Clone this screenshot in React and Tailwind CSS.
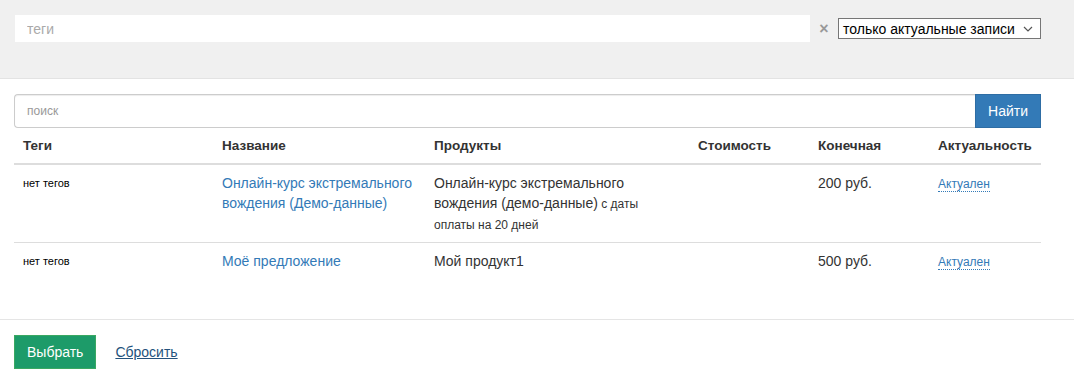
import React from 'react';

const rows = [
    {
        tags: 'нет тегов',
        name: 'Онлайн-курс экстремального вождения (Демо-данные)',
        product: 'Онлайн-курс экстремального вождения (демо-данные)',
        note: 'с даты оплаты на 20 дней',
        price: '200 руб.',
    },
    {
        tags: 'нет тегов',
        name: 'Моё предложение',
        product: 'Мой продукт1',
        note: null,
        price: '500 руб.',
    },
];

export default function App() {
    return (
        <div className="w-[1074px] h-[383px] bg-white text-[#333] text-[14px] leading-5 font-['Liberation_Sans',Arial,sans-serif] overflow-hidden">
            {/* Filter bar */}
            <div className="h-[79px] bg-[#f0f0f0] border-b border-[#e3e3e3] pl-[15px] pr-[33px] pt-[15px]">
                <div className="flex items-center">
                    <input
                        className="w-[795px] h-[27px] bg-white px-3 outline-none placeholder:text-[#aaa] text-[14px]"
                        placeholder="теги"
                    />
                    <span className="w-[28px] text-center text-[#999] text-[16px] font-bold leading-none">×</span>
                    <div className="flex-1 h-[21px] border border-[#767676] bg-white flex items-center justify-between pl-[4px] pr-[7px] text-[14px] text-black whitespace-nowrap">
                        <span>только актуальные записи</span>
                        <svg width="10" height="6" viewBox="0 0 10 6" fill="none" stroke="#555" strokeWidth="1.2">
                            <path d="M1 1l4 4 4-4" />
                        </svg>
                    </div>
                </div>
            </div>

            {/* Search + table */}
            <div className="pl-[14px] pr-[33px] pt-[15px]">
                <div className="flex h-[34px]">
                    <input
                        className="flex-1 border border-[#ccc] border-r-0 rounded-l-[4px] px-3 text-[12px] outline-none placeholder:text-[#999] shadow-[inset_0_1px_1px_rgba(0,0,0,0.075)]"
                        placeholder="поиск"
                    />
                    <button className="w-[66px] bg-[#337ab7] border border-[#2e6da4] text-white text-[14px]">Найти</button>
                </div>

                <table className="w-full border-collapse">
                    <thead>
                        <tr className="border-b-2 border-[#ddd] text-[13.5px] font-bold text-left">
                            <th className="w-[200px] px-[9px] pt-[8px] pb-[7px]">Теги</th>
                            <th className="w-[212px] px-[8px] pt-[8px] pb-[7px]">Название</th>
                            <th className="w-[264px] px-[8px] pt-[8px] pb-[7px]">Продукты</th>
                            <th className="w-[120px] px-[8px] pt-[8px] pb-[7px]">Стоимость</th>
                            <th className="w-[120px] px-[8px] pt-[8px] pb-[7px]">Конечная</th>
                            <th className="px-[8px] pt-[8px] pb-[7px]">Актуальность</th>
                        </tr>
                    </thead>
                    <tbody>
                        {rows.map((row, i) => (
                            <tr key={i} className={i === 0 ? 'border-b border-[#ddd] align-top' : 'align-top'}>
                                <td className="px-[9px] pt-[8px] pb-[7px] text-[11px] text-black">{row.tags}</td>
                                <td className="px-[8px] pt-[8px] pb-[7px]">
                                    <a href="#" className="text-[#337ab7]">{row.name}</a>
                                </td>
                                <td className="px-[8px] pt-[8px] pb-[7px]">
                                    {row.product}
                                    {row.note && <span className="text-[12px] leading-5"> {row.note}</span>}
                                </td>
                                <td className="px-[8px] pt-[8px] pb-[7px]"></td>
                                <td className="px-[8px] pt-[8px] pb-[7px]">{row.price}</td>
                                <td className="px-[8px] pt-[8px] pb-[7px]">
                                    <span className="text-[12px] text-[#337ab7] border-b border-dotted border-[#337ab7] leading-4">Актуален</span>
                                </td>
                            </tr>
                        ))}
                    </tbody>
                </table>
            </div>

            {/* Footer */}
            <div className="mt-[41px] border-t border-[#e5e5e5] px-[14px] pt-[15px] flex items-center gap-[19px]">
                <button className="h-[34px] px-[12px] bg-[#1d9b69] border border-[#3aa862] text-white text-[14px]">Выбрать</button>
                <a href="#" className="text-[#23527c] underline">Сбросить</a>
            </div>
        </div>
    );
}
